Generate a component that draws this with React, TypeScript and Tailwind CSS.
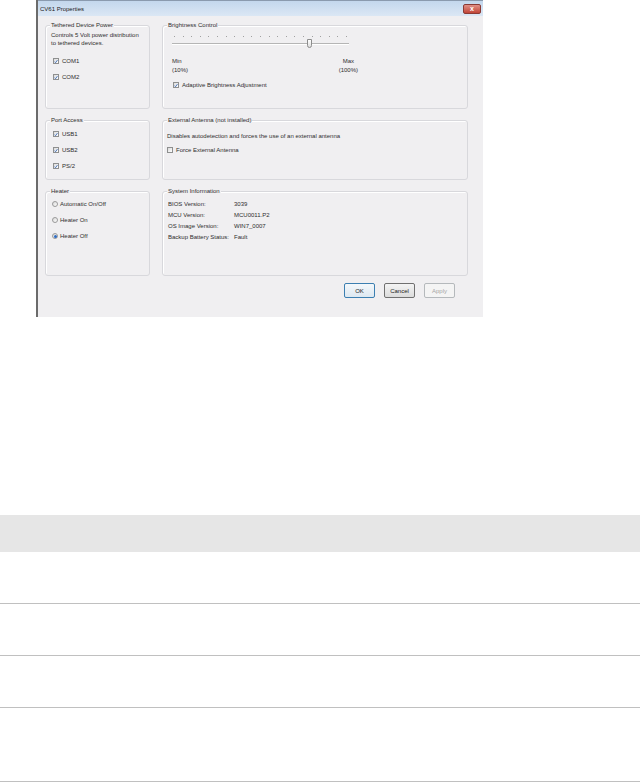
import type { ReactNode } from "react";

function Check({ checked, label }: { checked: boolean; label: string }) {
  return (
    <div className="flex h-[8px] items-center gap-[3px]">
      <span className="flex h-[6px] w-[6px] items-center justify-center border border-[#8e8f8f] bg-gradient-to-br from-[#dadada] to-white">
        {checked && (
          <svg viewBox="0 0 6 6" className="h-[5px] w-[5px]">
            <path d="M0.8 3.2 L2.3 4.8 L5.2 0.9" stroke="#2a5db0" strokeWidth="1.2" fill="none" />
          </svg>
        )}
      </span>
      <span>{label}</span>
    </div>
  );
}

function Radio({ checked, label }: { checked: boolean; label: string }) {
  return (
    <div className="flex h-[8px] items-center gap-[2px]">
      <span className="flex h-[6px] w-[6px] items-center justify-center rounded-full border border-[#9a9a9a] bg-gradient-to-br from-[#d8d8d8] to-white">
        {checked && <span className="h-[3px] w-[3px] rounded-full bg-[#2d6bc2]" />}
      </span>
      <span>{label}</span>
    </div>
  );
}

function Group({ title, children, className = "" }: { title: string; children: ReactNode; className?: string }) {
  return (
    <div className={`relative rounded-[3px] border border-[#d8d8dc] shadow-[inset_1px_1px_0_#ffffff] ${className}`}>
      <span className="absolute -top-[5px] left-[4px] bg-[#f0eff1] px-[1px] leading-[8px]">{title}</span>
      {children}
    </div>
  );
}

function Slider() {
  const ticks = Array.from({ length: 21 });
  return (
    <div className="relative h-[14px] w-[177px]">
      <div className="flex justify-between px-[2px]">
        {ticks.map((_, i) => (
          <span key={i} className="h-[1px] w-[1px] bg-[#a0a0a0]" />
        ))}
      </div>
      <div className="absolute left-0 right-0 top-[7px] h-[2px] border-t border-[#b5b5b5] border-b border-b-white bg-[#e2e2e2]" />
      <div className="absolute left-[135px] top-[3px] h-[9px] w-[5px] rounded-b-[3px] border border-[#8c8c8c] bg-gradient-to-b from-white to-[#dedede]" />
    </div>
  );
}

function Button({ label, kind }: { label: string; kind: "default" | "normal" | "disabled" }) {
  const cls =
    kind === "default"
      ? "border-[#3c7fb1] bg-gradient-to-b from-[#f4f8fb] to-[#dde8f1] text-[#222]"
      : kind === "normal"
        ? "border-[#707070] bg-gradient-to-b from-[#f4f4f4] to-[#dcdcdc] text-[#222]"
        : "border-[#b5b9bc] bg-[#f4f4f4] text-[#a6a6a6]";
  return (
    <div className={`flex h-[15px] w-[31px] items-center justify-center rounded-[2px] border ${cls}`}>{label}</div>
  );
}

export default function App() {
  return (
    <div className="min-h-[783px] bg-white text-[6px] leading-[8px] text-[#2e2e2e]" style={{ fontFamily: '"Liberation Sans", Arial, sans-serif' }}>
      <div className="ml-[36px] w-[447px] border-l-2 border-[#6b6b6b] bg-[#f0eff1]">
        <div className="flex h-[16px] items-center justify-between border-t border-[#8a9aae] bg-gradient-to-b from-[#c3d7ed] to-[#dbe7f4] pl-[2px] pr-[2px]">
          <span className="text-[#1b1b1b]">CV61 Properties</span>
          <div className="flex h-[10px] w-[18px] items-center justify-center rounded-[2px] border border-[#8a3a34] bg-gradient-to-b from-[#e08f86] to-[#c14336] text-[7px] font-bold leading-none text-white">
            x
          </div>
        </div>

        <div className="pb-[19px] pl-[7px] pr-[15px] pt-[9px]">
          <div className="grid grid-cols-[105px_306px] grid-rows-[84px_60px_85px] gap-x-[12px] gap-y-[11px]">
            <Group title="Tethered Device Power" className="pl-[5px] pt-[5px]">
              <p>Controls 5 Volt power distribution</p>
              <p>to tethered devices.</p>
              <div className="ml-[2px] mt-[10px] flex flex-col gap-[8px]">
                <Check checked label="COM1" />
                <Check checked label="COM2" />
              </div>
            </Group>

            <Group title="Brightness Control" className="pl-[9px] pt-[10px]">
              <Slider />
              <div className="mt-[7px] flex w-[186px] justify-between">
                <div>
                  <p>Min</p>
                  <p className="mt-[1px]">(10%)</p>
                </div>
                <div className="text-center">
                  <p>Max</p>
                  <p className="mt-[1px]">(100%)</p>
                </div>
              </div>
              <div className="ml-[1px] mt-[7px]">
                <Check checked label="Adaptive Brightness Adjustment" />
              </div>
            </Group>

            <Group title="Port Access" className="pl-[7px] pt-[9px]">
              <div className="flex flex-col gap-[8px]">
                <Check checked label="USB1" />
                <Check checked label="USB2" />
                <Check checked label="PS/2" />
              </div>
            </Group>

            <Group title="External Antenna (not installed)" className="pl-[4px] pt-[11px]">
              <p>Disables autodetection and forces the use of an external antenna</p>
              <div className="mt-[6px]">
                <Check checked={false} label="Force External Antenna" />
              </div>
            </Group>

            <Group title="Heater" className="pl-[6px] pt-[8px]">
              <div className="flex flex-col gap-[8px]">
                <Radio checked={false} label="Automatic On/Off" />
                <Radio checked={false} label="Heater On" />
                <Radio checked label="Heater Off" />
              </div>
            </Group>

            <Group title="System Information" className="pl-[5px] pt-[7px]">
              <div className="grid grid-cols-[66px_auto] leading-[11px]">
                <span>BIOS Version:</span>
                <span>3039</span>
                <span>MCU Version:</span>
                <span>MCU0011.P2</span>
                <span>OS Image Version:</span>
                <span>WIN7_0007</span>
                <span>Backup Battery Status:</span>
                <span>Fault</span>
              </div>
            </Group>
          </div>

          <div className="mr-[13px] mt-[7px] flex justify-end gap-[9px]">
            <Button label="OK" kind="default" />
            <Button label="Cancel" kind="normal" />
            <Button label="Apply" kind="disabled" />
          </div>
        </div>
      </div>

      <div className="mt-[198px]">
        <div className="h-[37px] bg-[#e6e6e6]" />
        <div className="h-[52px] border-b border-[#c0c0c0]" />
        <div className="h-[52px] border-b border-[#c0c0c0]" />
        <div className="h-[52px] border-b border-[#c0c0c0]" />
        <div className="h-[74px] border-b border-[#c0c0c0]" />
      </div>
    </div>
  );
}
